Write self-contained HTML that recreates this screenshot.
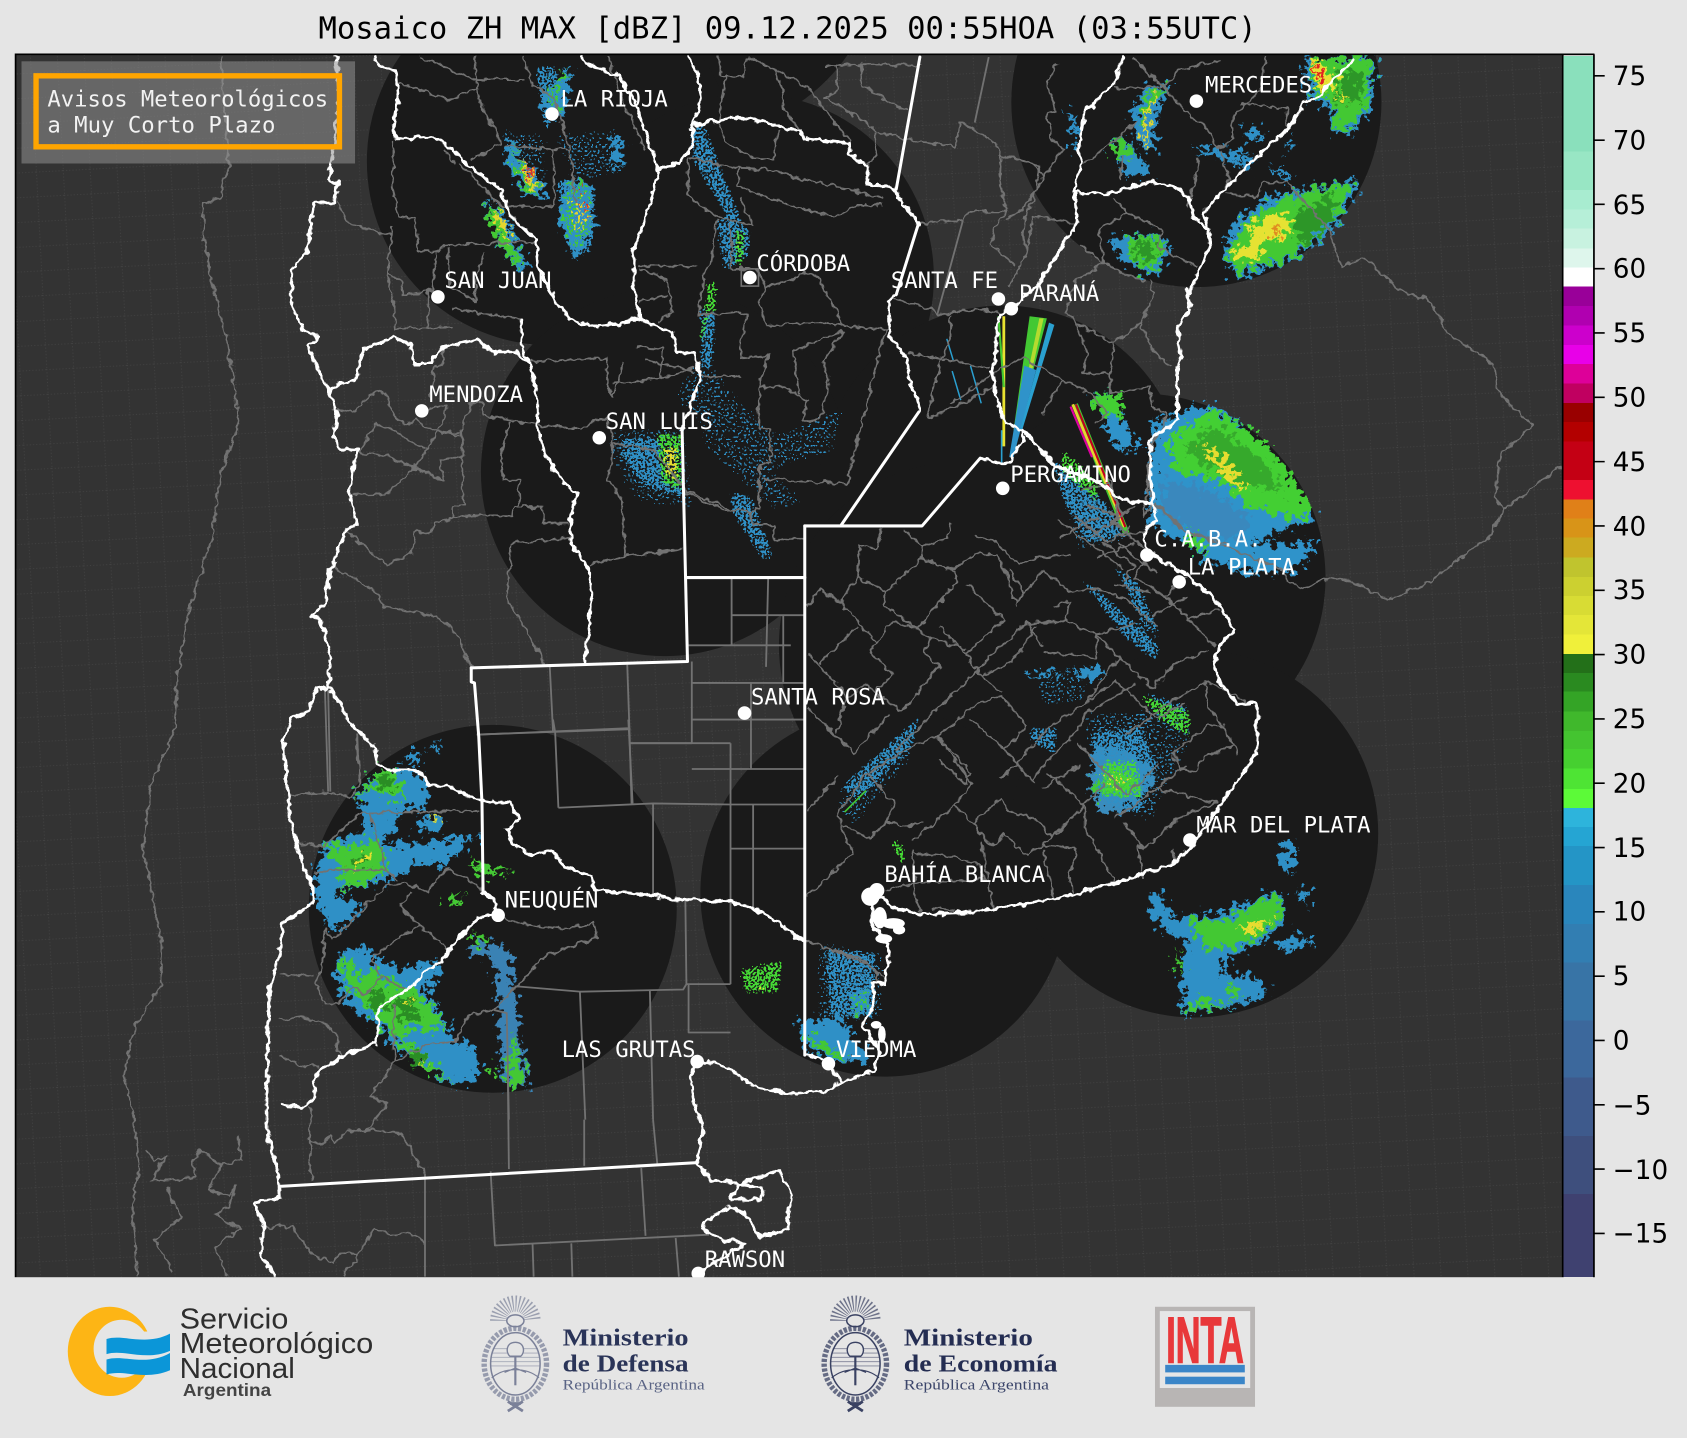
<!DOCTYPE html>
<html lang="es"><head><meta charset="utf-8"><title>Mosaico ZH MAX</title>
<style>
html,body{margin:0;padding:0;background:#e5e5e5;width:1687px;height:1438px;overflow:hidden}
svg{display:block}
.g polyline{fill:none;stroke:#727272;stroke-width:1.7;stroke-linejoin:round}
.w polyline{fill:none;stroke:#fff;stroke-width:2.8;stroke-linejoin:round;stroke-linecap:round}
.l text{font-family:"DejaVu Sans Mono","Liberation Mono",monospace;font-size:20.7px;fill:#fff}
.t text{font-family:"DejaVu Sans","Liberation Sans",sans-serif;font-size:24.4px;fill:#000}
</style></head><body>
<svg xmlns="http://www.w3.org/2000/svg" width="1687" height="1438" viewBox="0 0 1568 1337" preserveAspectRatio="none">
<defs>
<pattern id="dots" width="25" height="23" patternUnits="userSpaceOnUse" patternTransform="rotate(-3)">
<rect width="25" height="23" fill="#333"/>
<path d="M0 .5H25M.5 0V23" stroke="#434343" stroke-width=".8" stroke-dasharray="1 2"/>
</pattern>
<filter id="rough" filterUnits="userSpaceOnUse" x="0" y="0" width="1568" height="1337" color-interpolation-filters="sRGB">
<feTurbulence type="fractalNoise" baseFrequency=".16" numOctaves="3" seed="4" result="n"/>
<feDisplacementMap in="SourceGraphic" in2="n" scale="26" xChannelSelector="R" yChannelSelector="G"/>
</filter>
<filter id="wig" filterUnits="userSpaceOnUse" x="0" y="0" width="1568" height="1337" color-interpolation-filters="sRGB">
<feTurbulence type="fractalNoise" baseFrequency=".14" numOctaves="2" seed="9" result="n"/>
<feDisplacementMap in="SourceGraphic" in2="n" scale="7" xChannelSelector="R" yChannelSelector="G"/>
</filter>
<filter id="speck" filterUnits="userSpaceOnUse" x="0" y="0" width="1568" height="1337" color-interpolation-filters="sRGB">
<feGaussianBlur in="SourceGraphic" stdDeviation="3" result="b"/>
<feTurbulence type="fractalNoise" baseFrequency=".48" numOctaves="1" seed="7" result="n"/>
<feComposite in="b" in2="n" operator="arithmetic" k1="1" k2="0" k3="0" k4="0" result="p"/>
<feColorMatrix in="p" type="matrix" values="0 0 0 0 0 0 0 0 0 0 0 0 0 0 0 0 0 0 14 -6.500" result="m"/>
<feComposite in="b" in2="m" operator="in" result="c"/>
<feColorMatrix in="c" type="matrix" values="1 0 0 0 0 0 1 0 0 0 0 0 1 0 0 0 0 0 6 0"/>
</filter>
<filter id="sparse" filterUnits="userSpaceOnUse" x="0" y="0" width="1568" height="1337" color-interpolation-filters="sRGB">
<feGaussianBlur in="SourceGraphic" stdDeviation="5" result="b"/>
<feTurbulence type="fractalNoise" baseFrequency=".5" numOctaves="1" seed="12" result="n"/>
<feComposite in="b" in2="n" operator="arithmetic" k1="1" k2="0" k3="0" k4="0" result="p"/>
<feColorMatrix in="p" type="matrix" values="0 0 0 0 0 0 0 0 0 0 0 0 0 0 0 0 0 0 14 -8.600" result="m"/>
<feComposite in="b" in2="m" operator="in" result="c"/>
<feColorMatrix in="c" type="matrix" values="1 0 0 0 0 0 1 0 0 0 0 0 1 0 0 0 0 0 6 0"/>
</filter>
<clipPath id="ax"><rect x="15" y="51" width="1437" height="1137"/></clipPath>
<g id="escudo">
<path d="M-16 -36A16 16 0 0 1 16 -36" fill="none" stroke="currentColor" stroke-width="15" stroke-dasharray="1.100 1.700" opacity=".7"/>
<ellipse cx="0" cy="-36" rx="8" ry="5.500" fill="#e5e5e5" stroke="currentColor" stroke-width="1.400"/>
<ellipse cx="0" cy="4" rx="29" ry="33" fill="none" stroke="currentColor" stroke-width="5" stroke-dasharray="3 1.500" opacity=".75"/>
<ellipse cx="0" cy="4" rx="23" ry="29" fill="#e5e5e5" stroke="currentColor" stroke-width="1.400"/>
<path d="M-21 -10H21M-22 -6H22M-23 -2H23M-23 2H23M-23 6H23" stroke="currentColor" stroke-width=".8" opacity=".6"/>
<path d="M0 -16C-9 -16-9 -6-5 -3H5C9 -6 9 -16 0 -16Z" fill="#e5e5e5" stroke="currentColor" stroke-width="1.300"/>
<path d="M0 -3V24" stroke="currentColor" stroke-width="2"/>
<path d="M-22 17C-10 7 10 7 22 17M-10 12L0 8 10 12" fill="none" stroke="currentColor" stroke-width="1.100"/>
<path d="M-7 48L7 39M7 48L-7 39M-5 41H5" stroke="currentColor" stroke-width="2.600"/>
</g>
</defs>

<rect width="1568" height="1337" fill="#e5e5e5"/>
<text x="296" y="36" textLength="872" lengthAdjust="spacingAndGlyphs" style="font-family:'DejaVu Sans Mono','Liberation Mono',monospace;font-size:28.4px" fill="#000">Mosaico ZH MAX [dBZ] 09.12.2025 00:55HOA (03:55UTC)</text>

<g clip-path="url(#ax)">
<rect x="15" y="51" width="1437" height="1137" fill="url(#dots)"/>
<g fill="#1a1a1a">
<circle cx="647" cy="-46" r="171"/><circle cx="512" cy="150" r="171"/><circle cx="697" cy="258" r="171"/>
<circle cx="618" cy="439" r="171"/><circle cx="1112" cy="95" r="172"/><circle cx="932" cy="455" r="171"/>
<circle cx="1061" cy="537" r="171"/><circle cx="895" cy="600" r="171"/><circle cx="822" cy="830" r="171"/>
<circle cx="1110" cy="775" r="171"/><circle cx="458" cy="845" r="171"/>
</g>

<!-- radar echoes: solid -->
<g filter="url(#rough)">
<g transform="translate(260.3,669.2) scale(.3098)">
<g fill="#2f90c6">
<path d="M225 225L300 145 420 155 445 210 430 275 390 260 350 290 345 340 300 375 420 370 590 350 520 410 490 440 420 430 360 470 300 490 200 505 160 520 250 570 190 620 150 630 130 590 105 530 110 450 135 370 240 340 260 300 230 240Z"/>
<path d="M415 310L470 290 490 300 480 330 440 335Z"/><path d="M370 130L420 85 415 120 375 135Z"/><path d="M445 85L480 65 470 100Z"/>
<path d="M180 700L260 680 280 720 380 750 400 740 470 720 490 770 430 800 500 910 525 960 580 980 600 1030 580 1090 500 1090 450 1060 340 980 300 920 240 880 200 850 165 770Z"/>
<path d="M560 680L640 665 690 700 720 980 750 1100 670 1100 655 880 640 720 590 710Z" fill="#3a82b4"/>
</g>
<g fill="#44c834">
<path d="M225 235L300 145 340 150 380 230 320 235 275 195 235 240Z"/>
<path d="M135 375L240 375 270 350 310 400 315 450 300 470 220 500 185 505 190 450 145 410Z"/>
<path d="M180 710L220 730 240 780 280 740 310 780 390 800 440 840 500 920 440 940 400 920 360 950 430 1000 480 1060 520 1085 450 1060 370 990 320 930 280 880 230 840 190 780Z"/>
<path d="M680 1100L700 950 725 1040 735 1095Z"/><path d="M575 650L620 650 590 690Z"/><path d="M570 425L700 455 600 470Z"/><path d="M495 545L550 515 520 560Z"/>
<path d="M630 1045h20v20h-20z"/>
</g>
<g fill="#2a8d24"><path d="M215 430L240 400 270 430 220 445Z"/><path d="M260 830L310 810 330 860 280 880Z"/><path d="M290 170L330 170 340 210 300 200Z"/><path d="M340 830L400 840 420 900 360 900Z"/><path d="M380 990L430 1000 440 1040 400 1030Z"/></g>
<g fill="#e4e030"><path d="M235 420L265 400 265 425 245 430Z"/><path d="M220 435L232 430 232 445 220 445Z"/><path d="M424 1020h14v14h-14z"/><path d="M386 845h10v12h-10z"/><path d="M465 292h10v10h-10z"/></g>
</g>
<g transform="translate(929.5,27.9) scale(.3098)">
<g fill="#2f90c6">
<path d="M670 680L680 620 740 545 830 490 960 470 1075 450 1070 480 1000 600 870 690 710 745Z"/>
<path d="M920 80L1130 80 1110 230 1070 300 990 310 990 240 940 210 910 130Z"/>
<path d="M400 240L440 170 520 160 480 230 460 290 470 370 420 350 400 280Z"/>
<path d="M320 630L380 620 470 605 515 660 470 730 440 735 370 690 335 650Z"/>
<path d="M200 240L220 250 240 310 215 310Z"/><circle cx="225" cy="348" r="12"/>
<path d="M580 350L760 365 680 395 600 370Z"/><path d="M680 390L770 385 750 415 690 405Z"/><path d="M810 410L880 445 850 450Z"/><path d="M730 300L780 295 790 330 730 325Z"/>
<path d="M860 320L890 320 860 370Z"/><path d="M335 340L365 315 420 375 450 440 390 440 350 375Z"/>
</g>
<g fill="#43c833">
<path d="M690 640L740 580 830 510 950 475 1060 460 1000 580 870 680 715 730 690 690Z"/>
<path d="M930 80L1120 85 1100 215 1060 290 1000 300 1000 220 950 195 930 130Z"/>
<path d="M385 625L470 610 495 660 465 720 420 720 385 670Z"/>
<path d="M335 345L365 320 410 375 390 395 350 375Z"/>
</g>
<path d="M430 285C430 230 450 200 495 175" fill="none" stroke="#43c833" stroke-width="20"/>
<path d="M445 350C430 290 430 240 475 195" fill="none" stroke="#e4d630" stroke-width="9"/>
<g fill="#2d9628"><path d="M1010 120L1085 130 1080 210 1010 220Z"/><path d="M880 560L1000 490 1000 580 900 650Z"/><path d="M400 640L460 630 470 690 410 690Z"/></g>
<g fill="#e6e233"><path d="M700 670L760 620 740 590 800 560 840 550 880 575 850 630 790 630 780 680 740 700Z"/><path d="M930 85L960 85 1010 160 980 180 950 175Z"/><path d="M1010 190L1050 205 1040 212 1015 205Z"/></g>
<path d="M820 600L845 590 835 625Z" fill="#e08a20"/><path d="M940 95L950 95 975 155 960 160Z" fill="#e02020"/>
</g>
<g transform="translate(883,260.3) scale(.3098)">
<path d="M600 420L640 420 740 380 800 380 900 450 1000 550 1085 690 1090 720 1000 750 900 790 1100 790 1040 870 900 880 780 850 700 780 600 740 600 560 620 450Z" fill="#2f93ca"/>
<path d="M640 600L800 640 900 720 880 780 720 760 630 690Z" fill="#3a88bd"/>
<path d="M420 350L515 340 520 420 575 510 510 510 460 425Z" fill="#2f93ca"/>
<path d="M650 480L780 385 900 450 1000 550 1085 690 1040 720 900 680 800 600 680 580Z" fill="#43cf33"/>
<path d="M425 352L515 340 520 412 470 400 440 400Z" fill="#43cf33"/>
<path d="M700 500L800 440 940 540 1000 640 880 610 770 560Z" fill="#36a92c"/>
<path d="M750 495L820 530 860 590 905 625 860 625 810 570 760 510Z" fill="#e6dc30"/>
<path d="M700 780L730 760 780 825 740 810Z" fill="#43cf33"/>
</g>
<g transform="translate(734.3,483.3) scale(.3557)">
<g fill="#2f90c6">
<path d="M940 980L970 970 1000 1040 1130 1030 1240 980 1290 980 1290 1050 1250 1090 1180 1130 1130 1150 1130 1190 1210 1190 1250 1240 1170 1270 1030 1290 1020 1200 1040 1100 990 1090 945 1040Z"/>
<path d="M1290 840L1320 840 1320 920 1280 910Z"/><path d="M1330 960L1355 970 1350 1010 1330 990Z"/><path d="M1270 1105L1340 1085 1370 1105 1290 1130Z"/>
<path d="M800 600L860 590 940 640 950 690 890 750 810 770 785 690Z" fill="#3a8cbd"/>
<path d="M20 1310L130 1300 210 1410 130 1420 50 1390Z"/><path d="M150 1240L210 1230 210 1300 160 1290Z"/>
<path d="M615 400L690 395 690 410 620 410Z"/><path d="M730 390L810 385 820 410 760 415Z"/>
</g>
<g fill="#43c833">
<path d="M1040 1040L1130 1050 1240 990 1285 985 1280 1040 1230 1090 1140 1120 1080 1120Z"/>
<path d="M1060 1250L1150 1270 1030 1285Z"/><path d="M1150 1200L1180 1240 1150 1260Z"/>
<path d="M1010 1120L1030 1170 1010 1180Z"/><path d="M790 690L850 650 920 680 870 715 805 725Z"/>
<path d="M40 1340L110 1380 150 1410 70 1390Z"/><path d="M150 1250L205 1240 200 1290 165 1285Z"/>
</g>
<path d="M1165 1070L1260 1040 1210 1085Z" fill="#e6dc30"/>
<path d="M820 660L900 680 830 690Z" fill="#e6dc30"/>
</g>
<g fill="#2f90c6">
<path d="M450 185L470 200 490 250 480 250 460 220Z"/><path d="M525 165L550 175 552 215 535 240 520 210Z"/>
<path d="M470 125L495 160 510 185 490 180 470 150Z"/><path d="M500 100L530 60 525 110Z"/>
<path d="M568 125L580 130 577 158 569 155Z"/>
</g>
<g fill="#43c833"><path d="M452 188L465 200 485 245 478 245 458 215Z"/><path d="M530 170L548 178 548 215 535 232 525 205Z"/><path d="M475 135L492 165 500 182 488 175Z"/><path d="M505 90L525 65 518 100Z"/></g>
<g fill="#e4d62e"><path d="M530 185L545 180 547 205 535 215Z"/><path d="M460 195L470 205 475 225 466 215Z"/><path d="M484 145L492 158 498 178 490 170Z"/></g>
<g fill="#dc2828"><path d="M538 175L545 185 543 205Z"/><path d="M488 150L494 162 492 168Z"/></g>
</g>

<!-- speckled echoes -->
<g filter="url(#speck)" fill="#2f90c6">
<path d="M640 115L656 115 692 205 680 212 642 150Z"/>
<path d="M662 200L700 210 698 240 672 255Z"/><path d="M648 285L668 285 664 345 650 345Z"/>
<path d="M575 405L632 405 640 465 600 455 575 425Z"/>
<path d="M675 455L700 460 722 520 708 522 680 480Z"/>
<path d="M975 425L1010 440 1054 500 1010 508 988 470Z"/>
<path d="M1012 680L1060 672 1078 710 1060 760 1020 745Z"/><path d="M955 675L985 675 982 705 955 690Z"/>
<path d="M1060 640L1105 655 1108 685 1078 668Z"/>
<path d="M495 60L520 60 524 108 505 125Z"/><path d="M515 165L556 170 552 235 530 245Z"/>
<path d="M765 880L815 885 815 945 770 950Z"/>
<path d="M775 735L858 660 850 695 800 745Z"/>
<path d="M995 530L1020 545 1080 600 1075 618 1045 595Z"/>
<path d="M1030 520L1060 540 1085 600 1060 580Z"/>
</g>
<g filter="url(#sparse)" fill="#2f90c6">
<path d="M565 395L640 390 650 480 590 470 560 425Z"/>
<path d="M640 340L665 350 680 400 760 470 720 480 650 420Z"/>
<path d="M650 320L720 400 790 370 780 425 700 445 620 370Z"/>
<path d="M740 405L790 380 780 410 745 430Z"/>
<path d="M510 120L580 115 585 165 530 175Z"/><path d="M458 115L510 120 515 190 470 160Z"/>
<path d="M990 530L1070 590 1080 620 1040 590Z"/><path d="M1100 535L1195 565 1170 565Z"/>
<path d="M1000 660L1110 650 1112 690 1072 770 1015 750Z"/>
<path d="M755 870L825 880 825 950 755 960Z"/>
<path d="M955 620l60-5 0 40-50 10zM770 745l90-85-10 50-60 70z"/>
<path d="M970 410L1010 440 1056 505 1000 520 985 470Z"/>
</g>
<g filter="url(#speck)" fill="#45d835">
<path d="M608 400L636 402 636 460 612 450Z"/><path d="M1052 640L1108 660 1108 690 1075 670Z"/>
<path d="M1022 705L1058 705 1066 745 1022 742Z"/><path d="M985 412L1025 450 1020 470 985 440Z"/>
<path d="M655 260L668 260 668 290 652 300Z"/><path d="M680 210L695 215 692 250 682 250Z"/>
<path d="M650 295L660 295 655 320 648 318Z"/><path d="M685 900L730 890 725 925 690 925Z"/><path d="M825 770L845 790 840 810 830 795Z"/>
</g>
<g filter="url(#speck)" fill="#e4dc30">
<path d="M614 412L632 414 632 450 617 445Z"/><path d="M684 214L690 214 690 240 684 240Z"/><path d="M830 780L838 790 838 805Z"/><path d="M700 915l18 0 0 8-18 0z"/>
</g>

<!-- rays -->
<g fill="none" stroke-linecap="butt">
<path d="M933 294V415" stroke="#e8e230" stroke-width="2.600"/>
<path d="M928 294L933 360" stroke="#43c833" stroke-width="2"/>
<path d="M931 400V432" stroke="#2aa0d0" stroke-width="1.500"/>
<path d="M999 376L1047 496" stroke="#43c833" stroke-width="6"/>
<path d="M997 376L1045 490" stroke="#e6d62e" stroke-width="2.500"/>
<path d="M1000 376L1046 490" stroke="#c00020" stroke-width="2"/>
<path d="M995 378L1015 425" stroke="#e000a0" stroke-width="2"/>
<path d="M885 345L893 372M902 340L912 375M880 315L886 335" stroke="#2a9fd0" stroke-width="1.400"/>
<path d="M785 755L805 735" stroke="#43c833" stroke-width="1.500"/>
</g>
<polygon points="957,294 973,296 946,400 942,400" fill="#43c833"/>
<polygon points="966,296 970,296 948,395 945,395" fill="#e6e22e" opacity=".7"/>
<polygon points="952,340 963,344 942,425 938,425" fill="#2f93ca"/>
<polygon points="975,300 980,302 950,400 948,400" fill="#2aa0d0"/>

<!-- grey straight borders -->
<g class="g">
<polyline points="472,1000 473,1087"/><polyline points="543,1041 543,1084"/><polyline points="607,1041 611,1083"/>
<polyline points="395,1091 395,1187"/>
<polyline points="456,1089 460,1158 659,1148"/><polyline points="596,1086 600,1149"/><polyline points="495,1157 496,1187"/><polyline points="531,1156 532,1187"/><polyline points="628,1151 631,1187"/>
<polyline points="459,939 471,942 473,1041"/>
<polyline points="479,917 539,922 635,920 638,915 679,915"/><polyline points="539,922 544,1041"/><polyline points="604,920 607,1041"/>
<polyline points="638,915 637,837"/><polyline points="640,915 640,960 679,960"/>
<polyline points="443,683 586,678"/><polyline points="514,669 516,681 519,751"/><polyline points="519,751 607,747 679,748"/>
<polyline points="586,691 679,691"/><polyline points="584,669 588,747"/><polyline points="607,747 607,833"/>
<polyline points="511,620 514,680"/><polyline points="583,618 585,677 446,683"/><polyline points="585,677 587,747"/>
<polyline points="643,615 643,691 586,691"/><polyline points="643,635 748,635"/><polyline points="640,600 735,600"/><polyline points="680,537 680,600"/><polyline points="714,537 712,620"/><polyline points="680,572 748,572"/><polyline points="728,572 728,635"/>
<polyline points="643,669 748,669"/><polyline points="698,635 698,715"/><polyline points="643,715 748,715"/><polyline points="679,748 748,748"/><polyline points="679,691 679,915"/><polyline points="679,789 748,789"/><polyline points="700,748 700,845"/>
<polyline points="305,641 307,736"/><polyline points="302,641 305,736"/><polyline points="332,682 333,710"/>
<polyline points="919,53 906,114"/><polyline points="895,205 871,293"/>
</g>

<!-- grey wiggly borders -->
<g class="g" filter="url(#wig)">
<polyline points="205,53 213,155 206,173 206,183 190,189 189,217 196,257 210,313 219,369 222,395 205,440 197,500 175,570 165,630 162,680 140,730 133,790 150,875 150,915 125,955 115,1000 125,1040 130,1090 125,1100 123,1131 128,1187"/>
<polyline points="136,1069 144,1081 155,1075 141,1097 155,1098 181,1094 179,1078 187,1069 205,1084 224,1078 221,1056"/>
<polyline points="205,1084 195,1106 213,1112 219,1103 213,1122 200,1129 224,1143 200,1159 211,1187"/>
<polyline points="155,1103 168,1131 144,1153 160,1182"/>
<polyline points="1196,169 1236,214 1246,248 1267,239 1301,270 1330,280 1345,310 1376,329 1388,339 1391,360 1407,381 1425,395 1410,410 1394,422 1390,464 1397,474 1452,433"/>
<polyline points="1397,474 1387,497 1376,505 1330,540 1289,558 1261,542 1232,538 1211,549 1197,540 1193,530 1131,505 1100,493 1081,474"/>
<polyline points="288,1029 288,1087 291,1098"/>
<polyline points="288,1061 301,1064 307,1055 312,1061 323,1052 341,1050 373,1055 395,1091"/>
<polyline points="341,1050 360,1027 349,1022"/>
<polyline points="245,1142 272,1140 277,1150 291,1167 308,1174 315,1166 333,1165 347,1143 363,1148 381,1145 395,1156"/>
<polyline points="333,1165 333,1174 323,1177 320,1187"/>
<polyline points="366,933 366,988 345,1019 359,1027 350,1041"/>
<polyline points="366,988 397,971 423,968 437,943 459,939 508,888 555,872 553,858 524,864 496,861 471,855 463,850"/>
<polyline points="415,807 449,827"/>
<polyline points="415,807 397,829 378,821 359,824 338,844 310,874 302,864 299,901 293,914 301,933 315,933 328,917 339,925 355,908 345,892 372,871 389,860 372,843 384,829"/>
<polyline points="389,860 417,883"/><polyline points="355,908 376,920"/>
<polyline points="335,756 445,754"/><polyline points="344,757 359,809 300,809 293,812"/><polyline points="369,818 359,809"/>
<polyline points="335,756 301,787 276,784"/><polyline points="327,742 301,736 266,739"/><polyline points="332,684 335,728 327,742"/>
<polyline points="291,908 260,905"/><polyline points="260,948 279,946 301,951 314,963 313,976 319,982"/><polyline points="260,982 279,991 298,991"/>
<polyline points="679,838 700,845"/><polyline points="745,874 770,882 805,896 823,910"/>
<polyline points="412,322 412,335 403,344 400,370"/>
<polyline points="392,382 415,376 412,390 407,400 428,406"/>
<polyline points="307,380 328,383 350,363 359,366 363,381 376,395 387,390 392,395 407,400"/>
<polyline points="333,421 350,393 366,400 378,409 397,418 406,401 428,403"/>
<polyline points="333,421 359,424 412,446 409,428 429,424"/>
<polyline points="438,375 429,400 431,468 421,471 421,483 403,486 400,496 386,494 383,514 361,525 338,508 322,493"/>
<polyline points="421,483 434,479 474,480 479,471 505,471 505,486 528,486"/>
<polyline points="476,505 530,500"/><polyline points="476,505 471,555 494,595 507,617"/>
<polyline points="474,392 466,420 468,446 482,446 483,471"/>
<polyline points="438,375 449,375 449,386 499,395 524,398 539,398 555,390 564,390 570,412 565,446 578,465 581,517 547,525"/>
<polyline points="581,517 635,510"/>
<polyline points="493,336 564,333 565,360 570,369"/><polyline points="570,356 613,353 646,341"/><polyline points="592,322 617,325 613,353"/><polyline points="579,338 570,369"/>
<polyline points="570,412 607,418 637,455 679,474"/>
<polyline points="327,460 359,459 384,437 397,418"/><polyline points="384,435 412,446"/>
<polyline points="310,527 347,548 356,564 406,573 424,589 438,620"/>
<polyline points="391,53 441,74 487,74"/><polyline points="370,77 418,93 445,81"/>
<polyline points="441,53 445,93 466,133 437,150"/><polyline points="413,139 423,153"/>
<polyline points="427,152 466,192 516,192"/><polyline points="470,136 530,139"/><polyline points="514,138 516,192"/>
<polyline points="366,130 365,173 370,201 386,203 389,234 409,234 413,228 498,225"/>
<polyline points="405,234 402,270 375,274 373,260 359,254 365,211"/><polyline points="359,254 366,285 368,305 420,304"/>
<polyline points="398,270 398,304"/><polyline points="416,230 418,266 443,280 441,266 450,235"/><polyline points="420,287 484,297"/>
<polyline points="311,183 324,208 338,211 356,218 365,218"/><polyline points="487,53 495,80 515,90 530,140 535,190"/><polyline points="565,53 580,95 600,140"/>
<polyline points="641,147 688,156 685,174 710,182 734,191 775,202 796,191 821,191"/>
<polyline points="710,157 750,167 821,184"/><polyline points="688,156 710,157"/>
<polyline points="640,147 640,181 663,200 700,210 688,184"/>
<polyline points="666,204 661,244 654,254 649,293"/><polyline points="595,247 648,247"/>
<polyline points="679,207 680,250 703,250 713,267 750,254 759,257 775,284 784,303 827,307"/>
<polyline points="713,267 705,280 713,303 762,300 784,303"/>
<polyline points="694,293 689,317 688,333 714,330 705,363 706,398 716,398 716,430 706,433 706,473"/>
<polyline points="705,360 728,360 750,373 747,391 762,391 771,353 765,337 784,307"/>
<polyline points="784,307 737,327 743,367"/>
<polyline points="823,307 815,337 799,403 787,450 710,445"/>
<polyline points="649,293 688,290 694,293"/><polyline points="650,350 688,350"/>
<polyline points="635,456 672,474 697,476 706,473"/><polyline points="697,476 699,488 719,488 719,501 748,501"/>
<polyline points="595,516 635,511"/>
<polyline points="669,53 669,71 691,71 694,53"/><polyline points="674,71 668,111 674,132 700,147 719,147 723,121"/>
<polyline points="694,53 719,64 750,81 790,131"/><polyline points="719,64 728,84 727,99 744,122"/>
<polyline points="595,250 620,260 625,290 612,300"/><polyline points="595,280 620,275"/><polyline points="600,335 645,345"/>
<polyline points="768,61 855,60"/><polyline points="778,61 778,84 767,91 812,118 815,144 806,154"/>
<polyline points="815,123 855,132 888,136 892,113 926,134 931,144 929,167 936,197 926,210 920,227 945,247"/>
<polyline points="854,207 895,205 900,197 936,197"/>
<polyline points="827,277 864,287 871,293 905,287 931,291"/>
<polyline points="883,293 883,320 875,333 861,390 899,373 923,360"/><polyline points="843,328 920,342"/>
<polyline points="800,58 801,78 830,98 845,102"/>
<polyline points="931,144 967,154 960,187 954,197 951,217 954,235 939,266"/>
<polyline points="982,59 974,77 981,102 973,105 977,130 988,139 970,164 953,192 935,205"/>
<polyline points="929,144 961,152 970,164"/><polyline points="960,201 1001,208"/><polyline points="960,201 954,235"/>
<polyline points="1053,53 1081,81 1097,65 1134,56"/><polyline points="1081,81 1036,82"/>
<polyline points="1081,81 1100,102 1123,121 1131,138 1146,130 1146,108 1171,84 1177,53"/>
<polyline points="1153,96 1196,101 1196,121"/><polyline points="1041,127 1007,152"/><polyline points="1041,127 1057,112"/>
<polyline points="1044,144 1041,167"/><polyline points="1112,146 1115,152 1103,192"/><polyline points="1134,139 1143,167 1138,174"/>
<polyline points="1140,180 1168,183 1174,170 1196,169"/>
<polyline points="1035,184 1047,198 1022,214 1026,245 1044,254 1065,262"/><polyline points="1047,198 1081,214 1075,229 1112,248"/>
<polyline points="1001,301 1035,319 1060,301 1072,276 1069,260"/><polyline points="1001,301 1010,328 1007,347 1032,347 1032,366 1069,359 1070,378 1084,384 1084,393"/>
<polyline points="1035,319 1032,347"/><polyline points="1060,301 1072,327 1090,341"/>
<polyline points="883,375 898,366 917,350 951,332 988,353 973,378 970,385"/><polyline points="988,353 1013,366 1029,384 1019,393"/>
<polyline points="1005,228 1026,245 1001,260 990,290 1001,301"/>
<polyline points="1072,468 1069,437 1062,480 1072,468 1100,493"/>
<polyline points="1069,462 1066,434 1072,410 1081,400 1084,384"/>
<polyline points="1075,468 1097,492 1140,505"/>
<polyline points="1010,470 1040,480 1030,440"/><polyline points="1005,455 1030,450 1044,480"/><polyline points="1014,500 1055,470"/>
<polyline points="1000,480 1030,505 1050,490"/><polyline points="985,500 1020,480"/><polyline points="1040,505 1065,525"/>
</g>

<!-- Buenos Aires departments -->
<g filter="url(#wig)">
<g transform="translate(734.3,483.3) scale(.3557)" fill="none" stroke="#727272" stroke-width="4.800" stroke-linejoin="round">
<polyline points="240,20 230,75 180,68 178,150 130,215 80,180 45,225"/>
<polyline points="300,30 345,70 410,50 420,10"/><polyline points="345,70 345,100 250,190 245,225 330,285 440,160 420,130 345,100"/><polyline points="178,150 250,190"/>
<polyline points="130,215 225,320 270,265 330,285"/><polyline points="330,285 370,310 460,340"/>
<polyline points="225,320 210,345 270,405 220,450 290,500 345,440 390,380"/>
<polyline points="175,280 75,375"/><polyline points="45,350 150,460 205,430 220,450"/><polyline points="150,460 120,555"/><polyline points="45,490 165,610 260,510"/>
<polyline points="205,660 300,600 385,565 470,660 460,690 390,630"/>
<polyline points="125,770 200,660 270,740 250,790 310,800 350,790"/><polyline points="45,760 125,670"/>
<polyline points="45,985 165,870 150,840 125,770"/><polyline points="140,800 210,835 250,790"/>
<polyline points="385,565 490,480 550,460 620,540 560,600 640,690"/>
<polyline points="280,600 530,350 620,270 720,265 800,300 860,360 950,440"/>
<polyline points="320,840 430,745 480,795 550,730 570,760 640,780 685,830 770,745 820,690"/>
<polyline points="430,745 475,690 385,565"/>
<polyline points="480,795 530,855 560,820 620,880 660,850 685,825"/><polyline points="660,850 750,860 730,930 735,980"/>
<polyline points="500,840 505,870 530,1015"/><polyline points="320,860 325,970 340,1025"/><polyline points="320,870 420,880 490,900 510,940"/>
<polyline points="660,860 690,990"/><polyline points="770,745 770,800 850,950"/><polyline points="870,790 925,860 1020,775"/>
<polyline points="925,860 910,850 920,940"/><polyline points="1000,860 1005,890"/><polyline points="950,700 1115,740 1020,775"/>
<polyline points="670,660 770,745"/><polyline points="550,680 670,550 770,480 850,420 960,520 1030,480"/>
<polyline points="630,680 760,540 770,510 900,430"/><polyline points="750,580 880,720"/>
<polyline points="880,560 1000,470 1085,425 1130,440 1200,480"/><polyline points="1085,425 1095,490 1130,540 1170,610"/>
<polyline points="1000,610 1090,540 1130,540"/><polyline points="1000,610 1020,650 1060,660 1080,620 1160,590"/><polyline points="960,700 1040,640"/>
<polyline points="600,350 640,280"/><polyline points="720,265 730,210 690,230"/><polyline points="620,270 660,330"/><polyline points="800,300 800,360 660,345"/>
<polyline points="480,40 540,60 600,120 640,100 730,90"/><polyline points="420,130 480,90 540,90 570,150 590,220 610,190 570,130"/>
<polyline points="460,170 560,260 460,350 500,410 550,450"/><polyline points="460,350 390,280"/><polyline points="370,310 350,350 390,380 350,430"/><polyline points="500,410 560,380 600,350"/>
<polyline points="590,220 660,130 730,190 800,180 880,210 960,280"/>
<polyline points="700,0 780,60 870,130"/><polyline points="840,0 940,90 900,150 980,200 1050,140"/><polyline points="800,100 900,60"/><polyline points="850,170 940,190"/><polyline points="980,200 1060,280 1110,330"/><polyline points="1040,260 1120,235"/><polyline points="950,250 1040,200"/>
<polyline points="860,40 930,30"/><polyline points="820,60 900,120 870,160"/><polyline points="880,80 960,140"/>
<polyline points="40,1100 190,1150 230,1190 225,1210"/><polyline points="250,970 320,950 510,940"/><polyline points="370,1015 430,1020"/>
<polyline points="860,360 770,480"/><polyline points="950,440 1000,380 1090,340"/><polyline points="800,300 900,270"/><polyline points="560,600 470,520"/><polyline points="660,700 760,640"/><polyline points="880,720 960,640"/><polyline points="850,780 960,700"/>
</g>
</g>

<!-- white straight borders -->
<g class="w">
<polyline points="438,621 639,615 634,400"/>
<polyline points="438,621 438,634 441,635 445,685 448,747 449,830"/>
<polyline points="638,537 748,537"/><polyline points="748,489 748,981"/>
<polyline points="748,489 857,489 911,426"/>
<polyline points="782,488 854,383"/><polyline points="833,274 854,207"/>
<polyline points="855,53 833,176"/>
<polyline points="260,1103 648,1081"/>
</g>
<!-- white wiggly borders -->
<g class="w" filter="url(#wig)">
<polyline points="313,53 315,93 306,167 315,170 309,189 292,189 285,235 272,248 270,279 281,307 296,314 286,321 297,347 307,364 313,358 332,353 333,341 338,325 366,313 383,322 384,338 401,338 412,322 443,316 459,327 477,327 493,338 499,369 500,400 507,424 524,449 536,459 530,483 531,505 547,530 550,552 547,586 543,617"/>
<polyline points="485,298 485,325 493,338"/>
<polyline points="307,364 314,387 310,406 316,418 332,418 327,440 325,459 332,486 322,493 307,530 302,561 290,572 299,579 307,613 305,638 318,657 324,672 349,695 350,709 363,716 390,717 400,731 418,731 440,743 474,747 482,762 471,771 477,785 493,795 513,791 524,805 550,815 553,827 610,833 626,836 679,838 700,845 720,855 734,867 748,875"/>
<polyline points="304,641 294,640 288,660 270,669 263,688 265,709 270,762 276,784 282,806 291,827 291,840 263,858 260,886 250,920 248,1022 248,1053 259,1091 260,1114 237,1118 245,1140 243,1168 256,1187"/>
<polyline points="449,830 459,836 463,850 446,853 431,867 418,883 409,895 393,905 384,917 356,933 350,945 353,951 349,970 319,982 298,994 290,1004 294,1019 282,1030 260,1026"/>
<polyline points="634,400 641,380 651,350 646,328 629,328 626,310 595,297 555,304 530,297 516,279 500,248 498,223 473,198 466,177 441,158 420,139 402,127 370,129 365,124 370,90 368,67 350,59 349,53"/>
<polyline points="748,981 766,985 770,988 782,1006"/>
<polyline points="911,426 930,431 939,431 943,420 951,408 951,400"/>
<polyline points="854,383 854,373 846,357 843,333 827,313 826,280 833,274"/>
<polyline points="854,207 835,184 833,176 806,171 806,154 790,144 789,133 747,129 744,122 719,116 710,113 685,109 643,116 645,134 631,151 612,157 606,184 595,217 589,232 589,270 595,297"/>
<polyline points="641,54 649,71 652,94 648,106 643,116"/>
<polyline points="541,53 545,60 575,70 590,95 612,157"/>
<polyline points="648,987 642,1000 645,1022 653,1050 648,1081 661,1097 688,1101 723,1088 736,1112 731,1143 707,1151 693,1129 678,1122 656,1134 653,1142 672,1153 693,1156 656,1179 649,1184"/>
<polyline points="688,1101 709,1105 707,1115 678,1115 688,1101"/>
<polyline points="648,987 665,988 680,995 700,1010 734,1017 766,1015 782,1006 812,996 818,978 802,953 811,939 812,913 823,915 827,882 811,860 811,839 820,834 829,844 855,850 894,849 976,837 1030,823 1090,803 1106,789 1133,750 1168,700 1169,661 1165,654 1150,655 1133,633 1128,618 1133,601 1147,585 1133,562 1104,535 1076,519 1067,512 1063,499 1066,491 1075,483 1072,468 1044,465 1022,449 1007,443 982,434 970,421 954,403 945,398 934,393 926,369 922,344 926,332 926,304 931,291 940,287 964,266 976,248 985,232 1001,208 999,177 1004,180 1032,180 1053,173 1072,169 1097,177 1106,186 1109,201 1123,214 1125,226 1115,251 1106,273 1103,270 1106,288 1094,304 1098,332 1094,341 1094,390 1081,400 1069,409 1069,437 1072,468"/>
<polyline points="999,177 1005,152 1002,139 1008,105 1022,90 1036,77 1044,53"/>
<polyline points="1123,214 1118,198 1140,174 1165,149 1196,121 1214,94 1227,90 1239,74 1258,56"/>
</g>
<g fill="#fff" transform="translate(734.3,483.3) scale(.3557)">
<ellipse cx="270" cy="1055" rx="30" ry="14"/><ellipse cx="245" cy="1095" rx="22" ry="12"/><ellipse cx="285" cy="1072" rx="16" ry="12"/><circle cx="210" cy="985" r="24"/><ellipse cx="235" cy="1040" rx="18" ry="28"/>
<ellipse cx="225" cy="1320" rx="14" ry="10"/><ellipse cx="240" cy="1345" rx="10" ry="22"/>
</g>

<!-- cities -->
<g fill="#fff">
<circle cx="513" cy="106" r="6.300"/><circle cx="697" cy="258" r="6.300"/><circle cx="407" cy="276" r="6.300"/><circle cx="928" cy="278" r="6.300"/><circle cx="940" cy="287" r="6.300"/><circle cx="1112" cy="94" r="6.300"/><circle cx="392" cy="382" r="6.300"/><circle cx="557" cy="407" r="6.300"/><circle cx="932" cy="454" r="6.300"/><circle cx="1066" cy="516" r="6.300"/><circle cx="1096" cy="541" r="6.300"/><circle cx="692" cy="663" r="6.300"/><circle cx="1106" cy="781" r="6.300"/><circle cx="815" cy="828" r="7"/><circle cx="463" cy="851" r="6.300"/><circle cx="648" cy="987" r="6.300"/><circle cx="770" cy="989" r="6.300"/><circle cx="649" cy="1184" r="6.300"/>
</g>
<rect x="689" y="250" width="16" height="16" fill="none" stroke="#727272" stroke-width="1.500"/>
<g class="l">
<text x="521" y="99">LA RIOJA</text><text x="703" y="252">CÓRDOBA</text><text x="413" y="268">SAN JUAN</text><text x="828" y="268">SANTA FE</text><text x="947" y="280">PARANÁ</text><text x="1120" y="86">MERCEDES</text><text x="399" y="374">MENDOZA</text><text x="563" y="399">SAN LUIS</text><text x="939" y="448">PERGAMINO</text><text x="1073" y="508">C.A.B.A.</text><text x="1104" y="534">LA PLATA</text><text x="698" y="655">SANTA ROSA</text><text x="1112" y="774">MAR DEL PLATA</text><text x="822" y="820">BAHÍA BLANCA</text><text x="469" y="844">NEUQUÉN</text><text x="522" y="983">LAS GRUTAS</text><text x="777" y="983">VIEDMA</text><text x="655" y="1178">RAWSON</text>
</g>

<!-- avisos box -->
<rect x="20" y="57" width="310" height="95" fill="#8f8f8f" fill-opacity=".55"/>
<rect x="33.500" y="70.500" width="282" height="66" fill="none" stroke="#ffa500" stroke-width="5"/>
<text x="44" y="99" textLength="261" lengthAdjust="spacingAndGlyphs" style="font-family:'DejaVu Sans Mono','Liberation Mono',monospace;font-size:20.6px" fill="#f2f2f2">Avisos Meteorológicos</text>
<text x="44" y="123" textLength="212" lengthAdjust="spacingAndGlyphs" style="font-family:'DejaVu Sans Mono','Liberation Mono',monospace;font-size:20.6px" fill="#f2f2f2">a Muy Corto Plazo</text>
</g>

<!-- axes frame -->
<path d="M14.500 1188V50.500H1452.500V1188" fill="none" stroke="#000" stroke-width="1.600"/>

<!-- colorbar -->
<g shape-rendering="crispEdges">
<rect x="1453" y="52" width="28" height="89" fill="#8ae0bc"/><rect x="1453" y="141" width="28" height="36" fill="#98e6c4"/><rect x="1453" y="176.500" width="28" height="19" fill="#a8ecd0"/><rect x="1453" y="194.700" width="28" height="18" fill="#b6efd8"/><rect x="1453" y="212.600" width="28" height="19" fill="#c8f2e0"/><rect x="1453" y="231" width="28" height="18" fill="#def6ec"/><rect x="1453" y="248.700" width="28" height="18" fill="#fff"/><rect x="1453" y="266.500" width="28" height="18" fill="#990099"/><rect x="1453" y="284.400" width="28" height="19" fill="#b000b0"/><rect x="1453" y="302.600" width="28" height="19" fill="#cc00cc"/><rect x="1453" y="320.900" width="28" height="18" fill="#e800e8"/><rect x="1453" y="338.300" width="28" height="19" fill="#dd0099"/><rect x="1453" y="356.600" width="28" height="19" fill="#c00060"/><rect x="1453" y="374.800" width="28" height="18" fill="#990000"/><rect x="1453" y="392.300" width="28" height="19" fill="#b30000"/><rect x="1453" y="410.500" width="28" height="36" fill="#c40014"/><rect x="1453" y="446.200" width="28" height="19" fill="#ee1030"/><rect x="1453" y="464.500" width="28" height="18" fill="#e08018"/><rect x="1453" y="481.900" width="28" height="18" fill="#d89418"/><rect x="1453" y="499.800" width="28" height="19" fill="#ccaa20"/><rect x="1453" y="518.400" width="28" height="18" fill="#c0c42e"/><rect x="1453" y="536.300" width="28" height="18" fill="#ccd030"/><rect x="1453" y="554.100" width="28" height="18" fill="#d8dc34"/><rect x="1453" y="571.600" width="28" height="19" fill="#e4e638"/><rect x="1453" y="589.800" width="28" height="19" fill="#f0f03a"/><rect x="1453" y="608.100" width="28" height="18" fill="#237019"/><rect x="1453" y="625.500" width="28" height="18" fill="#2a8a20"/><rect x="1453" y="642.900" width="28" height="19" fill="#34a426"/><rect x="1453" y="661.600" width="28" height="18" fill="#40b82c"/><rect x="1453" y="679.500" width="28" height="17" fill="#44c430"/><rect x="1453" y="696.400" width="28" height="19" fill="#46d030"/><rect x="1453" y="714.600" width="28" height="19" fill="#4ee434"/><rect x="1453" y="733.500" width="28" height="18" fill="#5cfa38"/><rect x="1453" y="751.400" width="28" height="18" fill="#2db4dc"/><rect x="1453" y="768.900" width="28" height="18" fill="#25a5d3"/><rect x="1453" y="786.800" width="28" height="37" fill="#2495c6"/><rect x="1453" y="822.900" width="28" height="37" fill="#2a86bc"/><rect x="1453" y="859" width="28" height="37" fill="#327eb2"/><rect x="1453" y="895.100" width="28" height="54" fill="#3874a6"/><rect x="1453" y="949" width="28" height="53" fill="#3c689c"/><rect x="1453" y="1001.700" width="28" height="55" fill="#3e5a8c"/><rect x="1453" y="1056" width="28" height="55" fill="#3e4f7d"/><rect x="1453" y="1110.300" width="28" height="77" fill="#3f4170"/>
</g>
<path d="M1481.500 50.500V1188" stroke="#000" stroke-width="1.600" fill="none"/><path d="M1452 50.500H1482" stroke="#000" stroke-width="1.600"/>
<path d="M1482 70.500h9.500M1482 130.300h9.500M1482 190h9.500M1482 249.800h9.500M1482 309.600h9.500M1482 369.400h9.500M1482 429.200h9.500M1482 489h9.500M1482 548.800h9.500M1482 608.600h9.500M1482 668.400h9.500M1482 728.200h9.500M1482 788h9.500M1482 847.800h9.500M1482 907.600h9.500M1482 967.400h9.500M1482 1027.200h9.500M1482 1087h9.500M1482 1146.800h9.500" stroke="#000" stroke-width="1.500"/>
<g class="t">
<text x="1499" y="79">75</text><text x="1499" y="139">70</text><text x="1499" y="199">65</text><text x="1499" y="258">60</text><text x="1499" y="318">55</text><text x="1499" y="378">50</text><text x="1499" y="438">45</text><text x="1499" y="498">40</text><text x="1499" y="557">35</text><text x="1499" y="617">30</text><text x="1499" y="677">25</text><text x="1499" y="737">20</text><text x="1499" y="797">15</text><text x="1499" y="856">10</text><text x="1499" y="916">5</text><text x="1499" y="976">0</text><text x="1499" y="1036">−5</text><text x="1499" y="1096">−10</text><text x="1499" y="1155">−15</text>
</g>

<!-- logos -->
<rect x="0" y="1187.500" width="1568" height="150" fill="#e5e5e5"/>
<g>
<ellipse cx="102" cy="1256.500" rx="39" ry="41.500" fill="#fdb515"/>
<ellipse cx="113" cy="1254" rx="26" ry="27" fill="#e5e5e5"/>
<rect x="125" y="1238" width="20" height="39" fill="#e5e5e5"/>
<path d="M99 1245C115 1240 135 1252 158 1240V1256C135 1266 115 1254 99 1259Z" fill="#0b96d8"/>
<path d="M99 1264C115 1259 135 1271 158 1258V1274C135 1284 115 1273 99 1278Z" fill="#0b96d8"/>
<g style="font-family:'Liberation Sans',sans-serif" fill="#2e2e2e">
<text x="167" y="1235" font-size="27" textLength="101" lengthAdjust="spacingAndGlyphs">Servicio</text>
<text x="167" y="1258" font-size="27" textLength="180" lengthAdjust="spacingAndGlyphs">Meteorológico</text>
<text x="167" y="1281" font-size="27" textLength="107" lengthAdjust="spacingAndGlyphs">Nacional</text>
<text x="170" y="1298" font-size="16" font-weight="bold" fill="#444" textLength="82" lengthAdjust="spacingAndGlyphs">Argentina</text>
</g>
<use href="#escudo" x="479" y="1264" style="color:#7b8199"/>
<g style="font-family:'Liberation Serif',serif" fill="#2a3458">
<text x="523" y="1251" font-size="23" font-weight="bold" textLength="117" lengthAdjust="spacingAndGlyphs">Ministerio</text>
<text x="523" y="1275" font-size="23" font-weight="bold" textLength="117" lengthAdjust="spacingAndGlyphs">de Defensa</text>
<text x="523" y="1292" font-size="14" fill="#5a6485" textLength="132" lengthAdjust="spacingAndGlyphs">República Argentina</text>
</g>
<use href="#escudo" x="795" y="1264" style="color:#3a4263"/>
<g style="font-family:'Liberation Serif',serif" fill="#242d52">
<text x="840" y="1251" font-size="23" font-weight="bold" textLength="120" lengthAdjust="spacingAndGlyphs">Ministerio</text>
<text x="840" y="1275" font-size="23" font-weight="bold" textLength="143" lengthAdjust="spacingAndGlyphs">de Economía</text>
<text x="840" y="1292" font-size="14" fill="#3c466b" textLength="135" lengthAdjust="spacingAndGlyphs">República Argentina</text>
</g>
<rect x="1073.500" y="1215" width="93" height="93" fill="#b8b5b4"/>
<rect x="1078" y="1219" width="84" height="71.500" fill="#e6e6e6"/>
<text x="1084" y="1267" textLength="72" lengthAdjust="spacingAndGlyphs" stroke="#e8383a" stroke-width="1.400" style="font-family:'Liberation Sans',sans-serif;font-weight:bold;font-size:60px" fill="#e8383a">INTA</text>
<rect x="1083" y="1269" width="74" height="7" fill="#3b86c8"/><rect x="1083" y="1280" width="74" height="7" fill="#3b86c8"/>
</g>
</svg>
</body></html>
